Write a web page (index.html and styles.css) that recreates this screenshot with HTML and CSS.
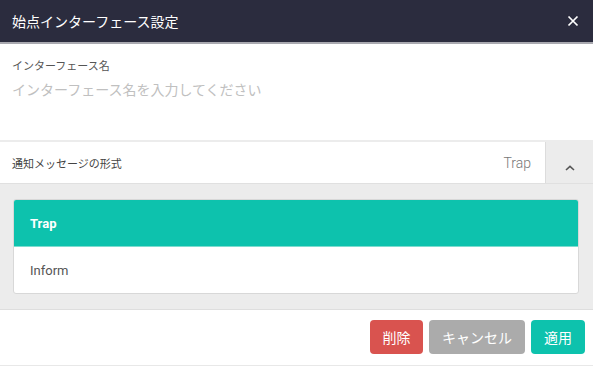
FILE: index.html
```html
<!DOCTYPE html>
<html lang="ja">
<head>
  <meta charset="UTF-8">
  <title>始点インターフェース設定</title>
  <link rel="stylesheet" href="styles.css">
</head>
<body>
  <div class="dialog">
    <header class="head">
      <h1>始点インターフェース設定</h1>
      <span class="close">
        <svg width="12" height="12" viewBox="0 0 12 12"><path d="M1.5 1.5l9 9M10.5 1.5l-9 9" stroke="#fff" stroke-width="1.7" fill="none"/></svg>
      </span>
    </header>

    <section class="field">
      <label>インターフェース名</label>
      <input placeholder="インターフェース名を入力してください">
    </section>

    <div class="select">
      <span class="select-label">通知メッセージの形式</span>
      <span class="select-value">Trap</span>
      <span class="select-arrow">
        <svg width="10" height="6" viewBox="0 0 10 6"><path d="M1 5l4-3.6L9 5" stroke="#555" stroke-width="1.6" fill="none"/></svg>
      </span>
    </div>

    <div class="panel">
      <ul class="options">
        <li class="active">Trap</li>
        <li>Inform</li>
      </ul>
    </div>

    <footer class="actions">
      <button class="btn red">削除</button>
      <button class="btn gray">キャンセル</button>
      <button class="btn teal">適用</button>
    </footer>
  </div>
</body>
</html>
```

FILE: styles.css
```css
body {
  margin: 0;
  font-family: Roboto, "Noto Sans CJK JP", sans-serif;
  background: #fff;
}

.dialog {
  width: 593px;
  height: 366px;
  display: flex;
  flex-direction: column;
}

.head {
  height: 42px;
  background: #2b2c3e;
  border-bottom: 2px solid #a9a9b0;
  display: flex;
  align-items: center;
  justify-content: space-between;
  padding: 0 14px 0 12px;

  h1 {
    margin: 0;
    font-size: 14px;
    font-weight: 400;
    color: #fff;
  }

  .close {
    display: flex;
  }
}

.field {
  height: 98px;
  padding: 13px 12px 0;
  box-sizing: border-box;
  border-bottom: 2px solid #ececec;

  label {
    display: block;
    font-size: 11px;
    color: #555;
    margin-bottom: 7px;
  }

  input {
    border: 0;
    outline: 0;
    padding: 0;
    width: 100%;
    font-family: inherit;
    font-size: 14px;
    color: #333;

    &::placeholder {
      color: #c0c0c0;
    }
  }
}

.select {
  height: 41px;
  display: flex;
  align-items: center;
  border-bottom: 1px solid #e0e0e0;

  .select-label {
    flex-grow: 1;
    padding-left: 12px;
    font-size: 11px;
    color: #444;
  }

  .select-value {
    font-size: 14px;
    font-weight: 300;
    color: #777;
    padding-right: 14px;
  }

  .select-arrow {
    width: 48px;
    height: 100%;
    background: #ececec;
    border-left: 1px solid #dcdcdc;
    display: flex;
    justify-content: center;
    align-items: center;
    padding-top: 10px;
    box-sizing: border-box;
  }
}

.panel {
  background: #ececec;
  padding: 15px 14px 16px 13px;
  height: 126px;
  box-sizing: border-box;
  border-bottom: 1px solid #dedede;
}

.options {
  list-style: none;
  margin: 0;
  padding: 0;
  background: #fff;
  border: 1px solid #d8d8d8;
  border-radius: 3px;
  overflow: hidden;

  li {
    height: 46px;
    display: flex;
    align-items: center;
    padding-left: 16px;
    font-size: 13px;
    color: #555;
  }

  .active {
    background: #0dc2ad;
    color: #fff;
    font-weight: 700;
    border-bottom: 1px solid #7ddccf;
  }
}

.actions {
  display: flex;
  justify-content: flex-end;
  gap: 6px;
  padding: 10px 8px 0;
  flex-grow: 1;
  border-bottom: 1px solid #e8e8e8;
}

.btn {
  height: 34px;
  border: 0;
  border-radius: 4px;
  padding: 0 12px;
  font-family: inherit;
  font-size: 14px;
  color: #fff;

  &.red {
    background: #d9534f;
    width: 53px;
  }

  &.gray {
    background: #ababab;
    width: 96px;
  }

  &.teal {
    background: #0dc2ad;
    width: 54px;
  }
}
```
